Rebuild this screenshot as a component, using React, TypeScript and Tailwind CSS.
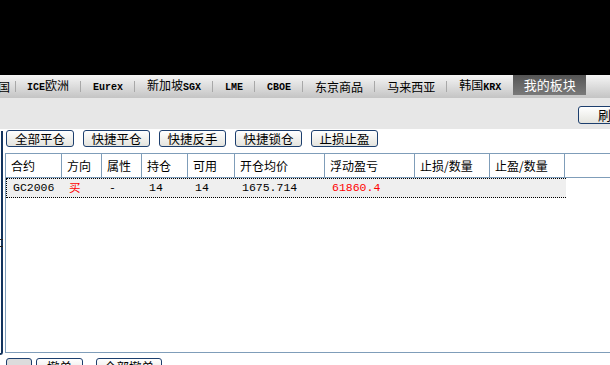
import React from 'react';

const CJK = '"Noto Sans CJK SC", "Liberation Sans", sans-serif';
const MONO = '"Liberation Mono", "Noto Sans CJK SC", monospace';

type Tab = { cjk?: string; latin?: string; latinFirst?: boolean };

const tabs: Tab[] = [
  { cjk: '欧洲', latin: 'ICE', latinFirst: true },
  { latin: 'Eurex' },
  { cjk: '新加坡', latin: 'SGX' },
  { latin: 'LME' },
  { latin: 'CBOE' },
  { cjk: '东京商品' },
  { cjk: '马来西亚' },
  { cjk: '韩国', latin: 'KRX' },
];

const cols = [
  { label: '合约', w: 'w-[56px]' },
  { label: '方向', w: 'w-[40px]' },
  { label: '属性', w: 'w-[40px]' },
  { label: '持仓', w: 'w-[46px]' },
  { label: '可用', w: 'w-[47px]' },
  { label: '开仓均价', w: 'w-[90px]' },
  { label: '浮动盈亏', w: 'w-[90px]' },
  { label: '止损/数量', w: 'w-[75px]' },
  { label: '止盈/数量', w: 'w-[75px]' },
];

const row = [
  { v: 'GC2006', red: false },
  { v: '买', red: true },
  { v: '-', red: false },
  { v: '14', red: false },
  { v: '14', red: false },
  { v: '1675.714', red: false },
  { v: '61860.4', red: true },
  { v: '', red: false },
  { v: '', red: false },
];

function TabLabel({ tab }: { tab: Tab }) {
  const latin = tab.latin ? (
    <span className="font-bold text-[10px]" style={{ fontFamily: MONO }}>
      {tab.latin}
    </span>
  ) : null;
  return (
    <span className="whitespace-nowrap text-[12px] leading-[14px] text-black" style={{ fontFamily: CJK }}>
      {tab.latinFirst && latin}
      {tab.cjk}
      {!tab.latinFirst && latin}
    </span>
  );
}

function Sep() {
  return <span className="w-px h-[11px] shrink-0 bg-[#a8a8a8] ml-[11px] mr-[12px]" />;
}

function Btn({ label, w, gray }: { label: string; w: string; gray?: boolean }) {
  return (
    <button
      className={`${w} h-[17px] shrink-0 whitespace-nowrap rounded-[3px] border border-[#1d3f6e] text-[12.5px] leading-[15px] text-black ${
        gray ? 'bg-[#dcdcdc]' : 'bg-gradient-to-b from-white to-[#e4e4de]'
      }`}
      style={{ fontFamily: CJK }}
    >
      {label}
    </button>
  );
}

export default function App() {
  return (
    <div className="w-[610px] h-[365px] overflow-hidden bg-black flex flex-col">
      <div className="h-[75px] shrink-0" />

      {/* market tabs */}
      <div className="h-[23px] shrink-0 flex items-center bg-gradient-to-b from-[#f5f5f5] to-[#c4c4c4]">
        <span className="text-[12px] leading-[14px] text-black -ml-[2px] w-[12px] shrink-0" style={{ fontFamily: CJK }}>国</span>
        <span className="w-px h-[11px] shrink-0 bg-[#a8a8a8] ml-[5px] mr-[11px]" />
        {tabs.map((t, i) => (
          <React.Fragment key={i}>
            {i > 0 && <Sep />}
            <TabLabel tab={t} />
          </React.Fragment>
        ))}
        <div
          className="ml-[12px] h-[20px] self-start w-[73px] shrink-0 flex items-center justify-center bg-gradient-to-b from-[#555] to-[#7a7a7a] text-white text-[13px]"
          style={{ fontFamily: CJK }}
        >
          我的板块
        </div>
      </div>

      {/* toolbar */}
      <div className="h-[31px] shrink-0 bg-[#e7e7e7] flex justify-end items-start pt-[8px]">
        <button
          className="w-[56px] h-[18px] -mr-[24px] shrink-0 whitespace-nowrap overflow-hidden rounded-[3px] border border-[#1d3f6e] bg-gradient-to-b from-white to-[#e4e4de] text-[13px] leading-[16px] text-left pl-[19px]"
          style={{ fontFamily: CJK }}
        >
          刷新
        </button>
      </div>

      {/* body */}
      <div className="flex-1 flex bg-white min-h-0">
        <div className="w-[3px] shrink-0 flex flex-col">
          <div className="h-[2px]" />
          <div className="flex-1 max-h-[224px] border-r-2 border-b-2 border-[#13345e] rounded-br-[4px] relative">
            <div className="absolute right-[-2px] top-[108px] w-[3px] h-[8px] border-y border-[#222]" />
          </div>
        </div>
        <div className="flex-1 flex flex-col pl-[2px] pt-[1px]">
          <div className="flex gap-[9px] h-[17px] ml-[1px]">
            <Btn label="全部平仓" w="w-[68px]" />
            <Btn label="快捷平仓" w="w-[67px]" />
            <Btn label="快捷反手" w="w-[67px]" />
            <Btn label="快捷锁仓" w="w-[67px]" />
            <Btn label="止损止盈" w="w-[67px]" />
          </div>

          <div className="mt-[6px] h-[200px] shrink-0 border-t border-l border-b border-[#7f9db9] flex flex-col">
            <div className="h-[24px] flex border-b border-[#7f9db9]">
              {cols.map((c) => (
                <div
                  key={c.label}
                  className={`${c.w} shrink-0 border-r border-[#7f9db9] pl-[5px] flex items-center text-[12px] text-black`}
                  style={{ fontFamily: CJK }}
                >
                  {c.label}
                </div>
              ))}
            </div>
            <div className="h-[20px] flex self-start bg-[#efefef] border border-dotted border-black border-r-0">
              {cols.map((c, i) => (
                <div
                  key={c.label}
                  className={`${c.w} shrink-0 pl-[6px] flex items-center text-[11.5px] ${
                    row[i].red ? 'text-[#ff0000]' : 'text-black'
                  }`}
                  style={{ fontFamily: i === 1 ? CJK : MONO }}
                >
                  {row[i].v}
                </div>
              ))}
            </div>
          </div>

          <div className="flex gap-[4px] mt-[5px] ml-[1px]">
            <Btn label="" w="w-[26px]" gray />
            <Btn label="撤单" w="w-[47px]" />
            <span className="w-[5px]" />
            <Btn label="全部撤单" w="w-[66px]" />
          </div>
        </div>
      </div>
    </div>
  );
}
